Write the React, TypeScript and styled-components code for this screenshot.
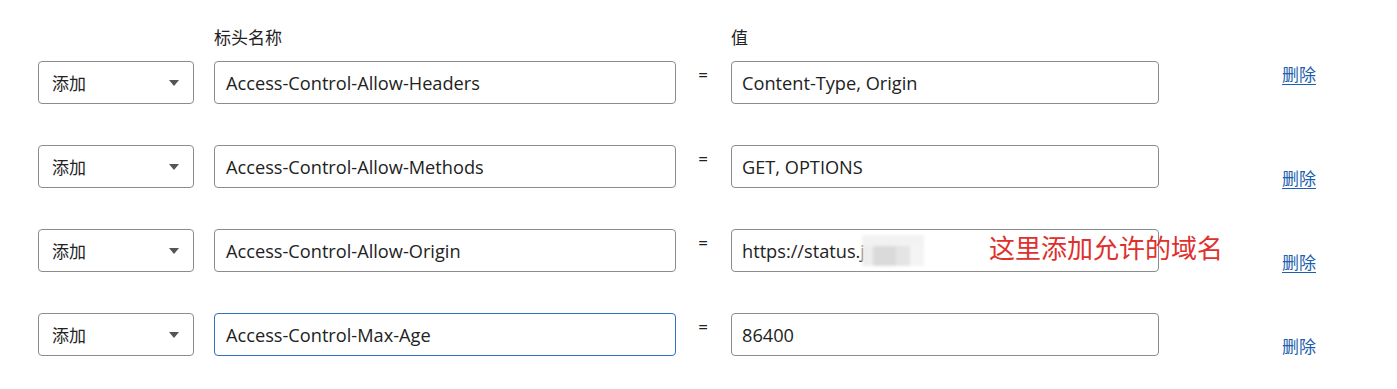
import React from "react";
import styled, { createGlobalStyle } from "styled-components";

const rows = [
  { name: "Access-Control-Allow-Headers", value: "Content-Type, Origin" },
  { name: "Access-Control-Allow-Methods", value: "GET, OPTIONS" },
  { name: "Access-Control-Allow-Origin", value: "https://status.j", masked: true },
  { name: "Access-Control-Max-Age", value: "86400", focused: true },
];

const App = () => {
  return (
    <>
      <GlobalStyle />
      <Page>
        <HeaderRow>
          <Label $col={3}>标头名称</Label>
          <Label $col={5}>值</Label>
        </HeaderRow>
        <Rows>
          {rows.map((row, idx) => (
            <Row key={idx}>
              <Select>
                <span>添加</span>
                <Caret />
              </Select>
              <Field $focused={row.focused}>{row.name}</Field>
              <Eq>=</Eq>
              <ValueWrap>
                <Field $pad={10}>{row.value}</Field>
                {row.masked && (
                  <>
                    <Blur />
                    <Note>这里添加允许的域名</Note>
                  </>
                )}
              </ValueWrap>
              <DeleteLink href="#" $top={idx === 0}>
                删除
              </DeleteLink>
            </Row>
          ))}
        </Rows>
      </Page>
    </>
  );
};

const GlobalStyle = createGlobalStyle`
  body {
    margin: 0;
    background: #ffffff;
    font-family: "Open Sans", "Noto Sans CJK SC", sans-serif;
    color: #222222;
  }
`;

const Page = styled.div`
  padding: 26px 0 0 38px;
`;

const columns = "156px 20px 462px 55px 428px 123px auto";

const HeaderRow = styled.div`
  display: grid;
  grid-template-columns: ${columns};
  height: 35px;
`;

const Label = styled.span<{ $col: number }>`
  grid-column: ${(p) => p.$col};
  font-size: 17px;
  line-height: 24px;
`;

const Rows = styled.div`
  display: flex;
  flex-direction: column;
  gap: 41px;
`;

const Row = styled.div`
  display: grid;
  grid-template-columns: ${columns};
  height: 43px;
  & > :nth-child(2) {
    grid-column: 3;
  }
  & > :nth-child(3) {
    grid-column: 4;
  }
  & > :nth-child(4) {
    grid-column: 5;
  }
  & > :nth-child(5) {
    grid-column: 7;
  }
`;

const Select = styled.div`
  box-sizing: border-box;
  height: 43px;
  border: 1px solid #8c8c8c;
  border-radius: 4px;
  display: flex;
  align-items: center;
  justify-content: space-between;
  padding: 0 14px 0 13px;
  font-size: 17px;
`;

const Caret = styled.span`
  width: 0;
  height: 0;
  border-left: 5px solid transparent;
  border-right: 5px solid transparent;
  border-top: 6px solid #555555;
`;

const Field = styled.div<{ $focused?: boolean; $pad?: number }>`
  box-sizing: border-box;
  height: 43px;
  border: 1px solid ${(p) => (p.$focused ? "#2f6fc1" : "#8c8c8c")};
  border-radius: 4px;
  display: flex;
  align-items: center;
  padding: 0 ${(p) => p.$pad ?? 11}px;
  font-size: 18.2px;
  color: #222222;
`;

const Eq = styled.span`
  font-size: 17px;
  line-height: 28px;
  text-align: center;
  padding-right: 1px;
`;

const ValueWrap = styled.div`
  position: relative;
`;

const Blur = styled.span`
  position: absolute;
  left: 131px;
  top: 6px;
  width: 62px;
  height: 31px;
  background: linear-gradient(
      180deg,
      #f2f2f2 0 35%,
      transparent 35% 100%
    ),
    linear-gradient(
      90deg,
      #ededed 0 18%,
      #dadada 18% 55%,
      #e4e4e4 55% 78%,
      #f4f4f4 78% 100%
    );
  filter: blur(1.5px);
`;

const Note = styled.span`
  position: absolute;
  left: 258px;
  top: 0;
  font-size: 26px;
  line-height: 36px;
  color: #e0302c;
  font-family: "Noto Sans CJK SC", sans-serif;
  white-space: nowrap;
`;

const DeleteLink = styled.a<{ $top?: boolean }>`
  align-self: ${(p) => (p.$top ? "start" : "end")};
  margin-top: ${(p) => (p.$top ? "3px" : "0")};
  margin-bottom: ${(p) => (p.$top ? "0" : "-2px")};
  font-size: 17px;
  line-height: 22px;
  color: #1d5fae;
  text-decoration: underline;
  text-underline-offset: 3px;
`;

export default App;
